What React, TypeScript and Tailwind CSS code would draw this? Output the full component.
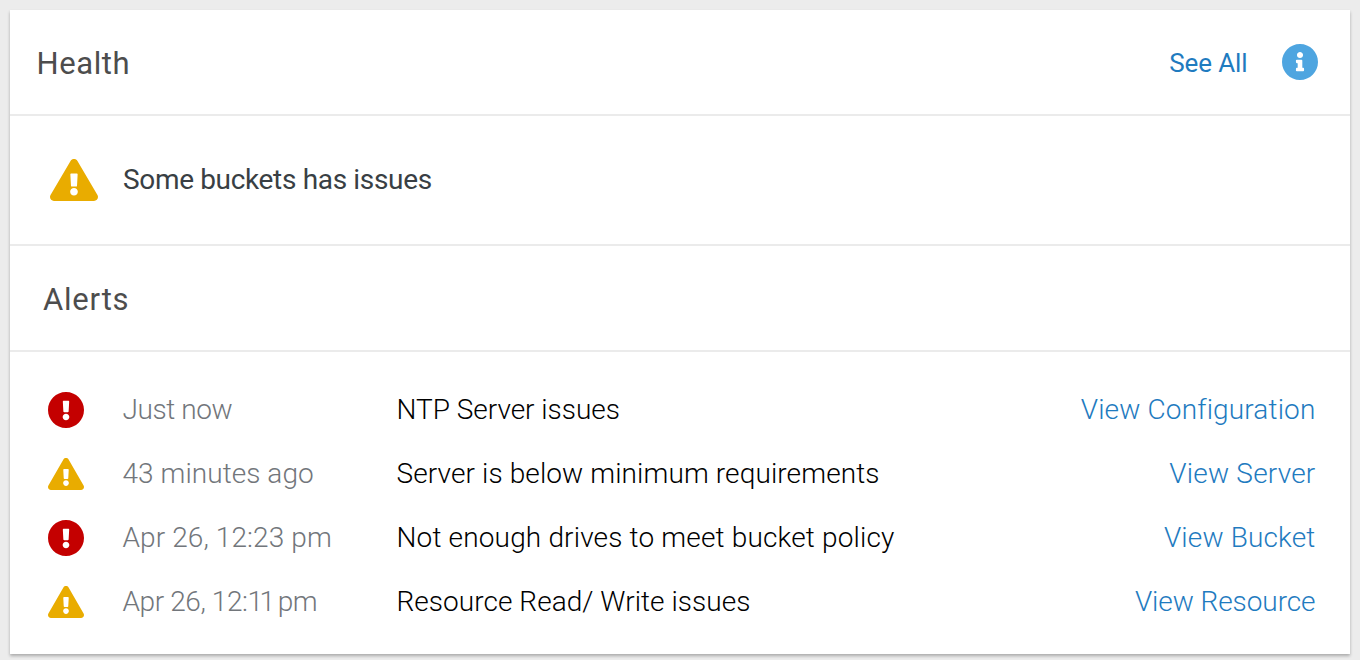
import type { ReactNode } from "react";
import { FaExclamationCircle, FaExclamationTriangle, FaInfoCircle } from "react-icons/fa";

type Severity = "error" | "warning";

interface Alert {
  id: string;
  severity: Severity;
  time: ReactNode;
  timeClass: string;
  message: string;
  messageClass: string;
  action: string;
  actionClass: string;
}

const alerts: Alert[] = [
  {
    id: "ntp",
    severity: "error",
    time: "Just now",
    timeClass: "tracking-[-0.4px]",
    message: "NTP Server issues",
    messageClass: "tracking-[-0.02px]",
    action: "View Configuration",
    actionClass: "tracking-[0.15px]",
  },
  {
    id: "requirements",
    severity: "warning",
    time: "43 minutes ago",
    timeClass: "tracking-[0.05px]",
    message: "Server is below minimum requirements",
    messageClass: "tracking-[0.11px]",
    action: "View Server",
    actionClass: "tracking-[0.2px]",
  },
  {
    id: "policy",
    severity: "error",
    time: "Apr 26, 12:23 pm",
    timeClass: "tracking-[0.1px]",
    message: "Not enough drives to meet bucket policy",
    messageClass: "tracking-[0.16px]",
    action: "View Bucket",
    actionClass: "tracking-[0.15px]",
  },
  {
    id: "resource",
    severity: "warning",
    time: (
      <>
        Apr 26, 12:<span className="tracking-[-3.7px]">11</span> pm
      </>
    ),
    timeClass: "tracking-[-0.4px]",
    message: "Resource Read/ Write issues",
    messageClass: "tracking-[0.04px]",
    action: "View Resource",
    actionClass: "tracking-[-0.08px]",
  },
];

function SeverityIcon({ severity }: { severity: Severity }) {
  return severity === "error" ? (
    <FaExclamationCircle viewBox="8 8 496 496" className="size-9 shrink-0 text-[#c40000]" />
  ) : (
    <FaExclamationTriangle className="h-8 w-9 shrink-0 text-[#e9ac00]" />
  );
}

function AlertRow({ alert }: { alert: Alert }) {
  return (
    <li className="flex h-16 items-center text-[28px] leading-8 font-light whitespace-nowrap">
      <div className="w-[74.5px] shrink-0">
        <SeverityIcon severity={alert.severity} />
      </div>
      <span className={`w-[274px] shrink-0 text-[#72767b] ${alert.timeClass}`}>{alert.time}</span>
      <span className={`grow text-black ${alert.messageClass}`}>{alert.message}</span>
      <a href="#" className={`text-[#1f7bbf] ${alert.actionClass}`}>
        {alert.action}
      </a>
    </li>
  );
}

export default function App() {
  return (
    <div className="h-[660px] w-[1360px] overflow-hidden bg-[#ececec] p-[10px] font-[Roboto,sans-serif]">
      <section className="h-[644px] bg-white shadow-[0_2px_3px_rgba(0,0,0,0.28)]">
        <header className="flex h-[106px] items-center border-b-2 border-[#ebebeb] pr-8 pl-[26.5px]">
          <h2 className="grow pt-1 text-[31px] leading-9 tracking-[0.6px] text-[#4d4d4d]">Health</h2>
          <a href="#" className="mr-[34.5px] pt-0.5 text-[26px] leading-8 tracking-[-0.1px] text-[#1f7bbf]">
            See All
          </a>
          <FaInfoCircle viewBox="8 8 496 496" className="size-9 text-[#4ea5e0]" />
        </header>
        <div className="flex h-[130px] items-center border-b-2 border-[#ebebeb] pl-10">
          <FaExclamationTriangle preserveAspectRatio="none" className="h-[42px] w-12 text-[#e9ac00]" />
          <p className="ml-[25px] text-[28px] leading-8 tracking-[-0.34px] text-[#393f44]">
            Some buckets has issues
          </p>
        </div>
        <div className="flex h-[106px] items-center border-b-2 border-[#ebebeb] pl-[33px]">
          <h2 className="pt-1 text-[31px] leading-9 tracking-[0.8px] text-[#4d4d4d]">Alerts</h2>
        </div>
        <ul className="pt-[26px] pr-[34.5px] pl-[38px]">
          {alerts.map((alert) => (
            <AlertRow key={alert.id} alert={alert} />
          ))}
        </ul>
      </section>
    </div>
  );
}
